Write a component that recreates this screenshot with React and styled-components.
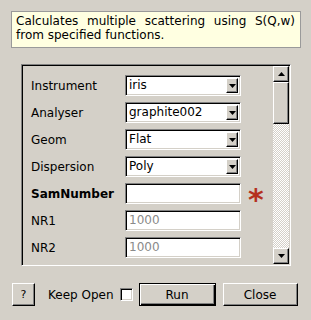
import styled, { createGlobalStyle } from 'styled-components';

const GlobalStyle = createGlobalStyle`
  html, body {
    margin: 0;
    padding: 0;
    background: #d4d0c8;
  }
  body {
    font-family: "DejaVu Sans", "Liberation Sans", sans-serif;
    font-size: 12px;
    color: #000;
  }
`;

const rows = [
  { label: 'Instrument', kind: 'combo', value: 'iris' },
  { label: 'Analyser', kind: 'combo', value: 'graphite002' },
  { label: 'Geom', kind: 'combo', value: 'Flat' },
  { label: 'Dispersion', kind: 'combo', value: 'Poly' },
  { label: 'SamNumber', kind: 'text', value: '', bold: true, required: true },
  { label: 'NR1', kind: 'text', placeholder: '1000' },
  { label: 'NR2', kind: 'text', placeholder: '1000' },
  { label: '', kind: 'text', placeholder: '' },
];

function Arrow({ up }) {
  return (
    <svg width="7" height="4" viewBox="0 0 7 4">
      <polygon points={up ? '3.5,0 7,4 0,4' : '0,0 7,0 3.5,4'} fill="#000" />
    </svg>
  );
}

function App() {
  return (
    <Dialog>
      <GlobalStyle />
      <Tip>Calculates multiple scattering using S(Q,w) from specified functions.</Tip>
      <Frame>
        <Viewport>
          <Form>
            {rows.map((row, i) => (
              <Row key={i}>
                <Label $bold={row.bold}>{row.label}</Label>
                {row.kind === 'combo' ? (
                  <Combo>
                    <ComboText>{row.value}</ComboText>
                    <ComboButton>
                      <Arrow />
                    </ComboButton>
                  </Combo>
                ) : (
                  <Field $muted={!!row.placeholder}>{row.placeholder || row.value}</Field>
                )}
                {row.required && <Star>*</Star>}
              </Row>
            ))}
          </Form>
        </Viewport>
        <ScrollBar>
          <ScrollButton>
            <Arrow up />
          </ScrollButton>
          <Handle />
          <Track />
          <ScrollButton>
            <Arrow />
          </ScrollButton>
        </ScrollBar>
      </Frame>
      <Footer>
        <HelpButton>?</HelpButton>
        <KeepOpen>
          <span>Keep Open</span>
          <CheckBox />
        </KeepOpen>
        <PushButton $default>Run</PushButton>
        <PushButton>Close</PushButton>
      </Footer>
    </Dialog>
  );
}

const Dialog = styled.div`
  width: 311px;
  height: 320px;
  box-sizing: border-box;
  padding: 11px 10px 0 11px;
  overflow: hidden;
`;

const Tip = styled.div`
  width: 290px;
  box-sizing: border-box;
  height: 37px;
  padding: 2px 5px 0 4px;
  background: #ffffe1;
  border: 1px solid #9a9a9a;
  line-height: 14px;
  text-align: justify;
`;

const Frame = styled.div`
  margin: 16px 10px 0 10px;
  height: 202px;
  box-sizing: border-box;
  display: flex;
  border: 1px solid;
  border-color: #808080 #fff #fff #808080;
  box-shadow: inset 1px 1px 0 #000, inset -1px -1px 0 #d4d0c8;
  padding: 1px;
`;

const Viewport = styled.div`
  flex: 1;
  overflow: hidden;
`;

const Form = styled.div`
  padding: 9px 0 0 8px;
  display: flex;
  flex-direction: column;
  gap: 6px;
`;

const Row = styled.div`
  display: flex;
  align-items: center;
  height: 21px;
`;

const Label = styled.div`
  width: 94px;
  flex: none;
  font-weight: ${(p) => (p.$bold ? 'bold' : 'normal')};
`;

const sunken = `
  box-sizing: border-box;
  border: 1px solid;
  border-color: #808080 #fff #fff #808080;
  box-shadow: inset 1px 1px 0 #000, inset -1px -1px 0 #d4d0c8;
  background: #fff;
`;

const raised = `
  box-sizing: border-box;
  border: 1px solid;
  border-color: #fff #000 #000 #fff;
  box-shadow: inset -1px -1px 0 #808080;
  background: #d4d0c8;
`;

const Combo = styled.div`
  ${sunken}
  width: 116px;
  height: 21px;
  display: flex;
  align-items: center;
  padding: 2px;
`;

const ComboText = styled.div`
  flex: 1;
  padding-left: 1px;
  line-height: 15px;
`;

const ComboButton = styled.div`
  ${raised}
  width: 12px;
  height: 15px;
  display: flex;
  align-items: center;
  justify-content: center;
  svg {
    margin-top: 1px;
  }
`;

const Field = styled.div`
  ${sunken}
  width: 116px;
  height: 21px;
  padding: 2px 3px;
  line-height: 15px;
  color: ${(p) => (p.$muted ? '#8a8a8a' : '#000')};
`;

const Star = styled.div`
  margin-left: 7px;
  color: #b5301f;
  font-weight: bold;
  font-size: 30px;
  line-height: 21px;
  height: 21px;
  padding-top: 6px;
  box-sizing: border-box;
`;

const ScrollBar = styled.div`
  width: 16px;
  flex: none;
  display: flex;
  flex-direction: column;
`;

const ScrollButton = styled.div`
  ${raised}
  width: 16px;
  height: 16px;
  flex: none;
  display: flex;
  align-items: center;
  justify-content: center;
`;

const Handle = styled.div`
  ${raised}
  height: 42px;
  flex: none;
`;

const Track = styled.div`
  flex: 1;
  background: repeating-conic-gradient(#fff 0 25%, #d4d0c8 0 50%) 0 0 / 2px 2px;
`;

const Footer = styled.div`
  margin-top: 17px;
  display: flex;
  align-items: center;
  height: 23px;
`;

const HelpButton = styled.button`
  ${raised}
  margin-left: 1px;
  width: 23px;
  height: 23px;
  padding: 0;
  font-family: inherit;
  font-size: 11px;
  color: #000;
`;

const KeepOpen = styled.div`
  margin-left: 13px;
  display: flex;
  align-items: center;
  gap: 6px;
  line-height: 16px;
`;

const CheckBox = styled.span`
  ${sunken}
  width: 13px;
  height: 13px;
`;

const PushButton = styled.button`
  box-sizing: border-box;
  width: ${(p) => (p.$default ? '77px' : '75px')};
  height: 23px;
  margin-left: ${(p) => (p.$default ? '6px' : '7px')};
  padding: 0;
  font-family: inherit;
  font-size: 12px;
  color: #000;
  background: #d4d0c8;
  border: 1px solid;
  border-color: ${(p) => (p.$default ? '#000' : '#fff #000 #000 #fff')};
  box-shadow: ${(p) =>
    p.$default
      ? 'inset 1px 1px 0 #fff, inset -1px -1px 0 #000, inset -2px -2px 0 #808080'
      : 'inset -1px -1px 0 #808080'};
`;

export default App;
